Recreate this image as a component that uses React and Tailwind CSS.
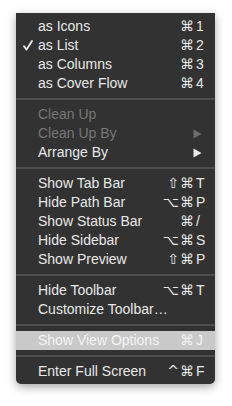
import React from "react";

const items = [
  { label: "as Icons", mods: "⌘", key: "1" },
  { label: "as List", mods: "⌘", key: "2", checked: true },
  { label: "as Columns", mods: "⌘", key: "3" },
  { label: "as Cover Flow", mods: "⌘", key: "4" },
  "sep",
  { label: "Clean Up", disabled: true },
  { label: "Clean Up By", disabled: true, submenu: true },
  { label: "Arrange By", submenu: true },
  "sep",
  { label: "Show Tab Bar", mods: "⇧⌘", key: "T" },
  { label: "Hide Path Bar", mods: "⌥⌘", key: "P" },
  { label: "Show Status Bar", mods: "⌘", key: "/" },
  { label: "Hide Sidebar", mods: "⌥⌘", key: "S" },
  { label: "Show Preview", mods: "⇧⌘", key: "P" },
  "sep",
  { label: "Hide Toolbar", mods: "⌥⌘", key: "T" },
  { label: "Customize Toolbar…" },
  "sep",
  { label: "Show View Options", mods: "⌘", key: "J", highlight: true },
  "sep",
  { label: "Enter Full Screen", mods: "^⌘", key: "F" },
];

function Check() {
  return (
    <svg width="10" height="11" viewBox="0 0 10 11" className="ml-[7px]">
      <path d="M1 6.2 L3.6 9.6 L9 1" fill="none" stroke="#ececec" strokeWidth="1.8" strokeLinecap="round" strokeLinejoin="round" />
    </svg>
  );
}

function Arrow({ color }) {
  return (
    <svg width="9" height="10" viewBox="0 0 9 10">
      <path d="M0.5 0.5 L8.5 5 L0.5 9.5 Z" fill={color} />
    </svg>
  );
}

function Row({ item }) {
  let text = "text-[#e8e8e8]";
  if (item.disabled) text = "text-[#767676]";
  if (item.highlight) text = "text-[#f4f4f4]";
  return (
    <div className={`flex h-[19px] items-center leading-[19px] ${item.highlight ? "bg-[#c9c9c9]" : ""} ${text}`}>
      <div className="flex w-[22px] items-center">{item.checked && <Check />}</div>
      <div className="flex-1 whitespace-nowrap">{item.label}</div>
      {item.key && (
        <div className="flex items-center pr-[9px]">
          <span className="text-right font-['DejaVu_Sans',sans-serif] text-[14px] tracking-[1px]">{item.mods}</span>
          <span className="w-[11px] pl-[1px] text-left">{item.key}</span>
        </div>
      )}
      {item.submenu && (
        <div className="pr-[13px] flex items-center">
          <Arrow color={item.disabled ? "#6e6e6e" : "#ececec"} />
        </div>
      )}
    </div>
  );
}

export default function App() {
  return (
    <div className="min-h-[406px] w-[232px] bg-white pl-[16px] pt-[13px] font-['Liberation_Sans',Arial,sans-serif] text-[14px]">
      <div className="w-[199px] rounded-b-[5px] bg-[#323232] pt-[4px] pb-[3px] shadow-[0_3px_10px_rgba(0,0,0,0.35)]">
        {items.map((item, i) =>
          item === "sep" ? (
            <div key={i} className="flex h-[12px] items-center">
              <div className="h-[2px] w-full bg-[#4e4e4e]" />
            </div>
          ) : (
            <Row key={i} item={item} />
          )
        )}
      </div>
    </div>
  );
}
